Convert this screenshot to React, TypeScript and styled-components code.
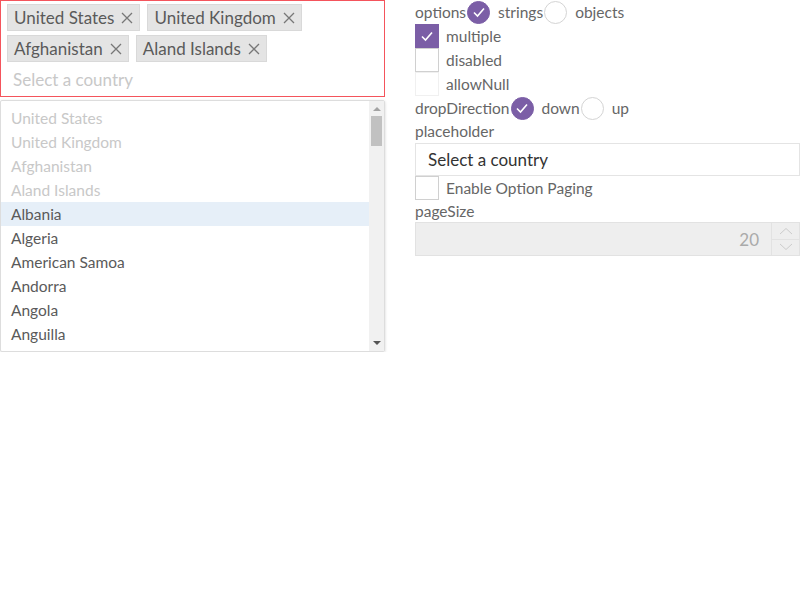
import React from "react";
import styled, { createGlobalStyle } from "styled-components";

const GlobalStyle = createGlobalStyle`
  body {
    margin: 0;
    background: #fff;
    font-family: Lato, "Noto Sans", sans-serif;
    color: #555;
  }
`;

const selected = ["United States", "United Kingdom", "Afghanistan", "Aland Islands"];
const options = [
  "United States",
  "United Kingdom",
  "Afghanistan",
  "Aland Islands",
  "Albania",
  "Algeria",
  "American Samoa",
  "Andorra",
  "Angola",
  "Anguilla",
];

const Page = styled.div`
  display: grid;
  grid-template-columns: 385px 385px;
  column-gap: 30px;
  align-items: start;
`;

const LeftColumn = styled.div`
  display: flex;
  flex-direction: column;
  gap: 3px;
`;

const SelectBox = styled.div`
  box-sizing: border-box;
  height: 97px;
  border: 1px solid #f4545c;
  padding: 3px 6px 0;
  display: flex;
  flex-wrap: wrap;
  align-content: flex-start;
  gap: 4px 7px;
`;

const Tag = styled.span`
  box-sizing: border-box;
  height: 27px;
  display: inline-flex;
  align-items: center;
  gap: 7px;
  padding: 0 6px;
  background: #e4e4e4;
  border: 1px solid #d9d9d9;
  color: #5a5a5a;
  font-size: 17px;
`;

const Remove = styled.svg`
  width: 12px;
  height: 12px;
  stroke: #777;
  stroke-width: 1.3;
`;

const Placeholder = styled.div`
  width: 100%;
  padding: 2px 0 0 6px;
  line-height: 24px;
  color: #c8c8c8;
  font-size: 17px;
`;

const Dropdown = styled.div`
  box-sizing: border-box;
  height: 252px;
  display: flex;
  border: 1px solid #ddd;
  border-radius: 2px;
  box-shadow: 0 1px 3px rgba(0, 0, 0, 0.18);
  overflow: hidden;
`;

const List = styled.ul`
  flex: 1;
  margin: 0;
  padding: 5px 0 0;
  list-style: none;
  overflow: hidden;
`;

const Item = styled.li<{ $muted?: boolean; $active?: boolean }>`
  height: 24px;
  line-height: 24px;
  padding-left: 10px;
  font-size: 15.5px;
  color: ${(p) => (p.$muted ? "#c8c8c8" : "#5a5a5a")};
  background: ${(p) => (p.$active ? "#e6eff8" : "transparent")};
`;

const Track = styled.div`
  width: 15px;
  background: #f1f1f1;
  display: flex;
  flex-direction: column;
  align-items: center;
`;

const Arrow = styled.div<{ $down?: boolean }>`
  width: 0;
  height: 0;
  margin: ${(p) => (p.$down ? "auto 0 6px" : "6px 0 0")};
  border-left: 4px solid transparent;
  border-right: 4px solid transparent;
  ${(p) => (p.$down ? "border-top: 4px solid #555;" : "border-bottom: 4px solid #a3a3a3;")}
`;

const Thumb = styled.div`
  width: 11px;
  height: 30px;
  margin-top: 5px;
  background: #c1c1c1;
`;

const RightColumn = styled.div`
  display: flex;
  flex-direction: column;
  font-size: 15.5px;
  color: #666;
`;

const Row = styled.div`
  height: 24px;
  display: flex;
  align-items: center;
`;

const Label = styled.span`
  line-height: 24px;
`;

const OptionLabel = styled.span`
  margin-left: 8px;
`;

const Radio = styled.span<{ $checked?: boolean }>`
  box-sizing: border-box;
  width: 23px;
  height: 23px;
  margin-left: 1px;
  border-radius: 50%;
  display: inline-flex;
  align-items: center;
  justify-content: center;
  background: ${(p) => (p.$checked ? "#7b5ea6" : "#fff")};
  border: 1px solid ${(p) => (p.$checked ? "#7b5ea6" : "#d4d4d4")};
`;

const Check = styled.span<{ $checked?: boolean; $faint?: boolean }>`
  box-sizing: border-box;
  width: 24px;
  height: 24px;
  display: inline-flex;
  align-items: center;
  justify-content: center;
  background: ${(p) => (p.$checked ? "#7b5ea6" : "#fff")};
  border: 1px solid
    ${(p) => (p.$checked ? "#7b5ea6" : p.$faint ? "#f0f0f0" : "#d0d0d0")};
  margin-right: 7px;
`;

const Tick = styled.svg`
  width: 14px;
  height: 14px;
  fill: none;
  stroke: #fff;
  stroke-width: 1.6;
`;

const FieldLabel = styled.div<{ $h: number }>`
  height: ${(p) => p.$h}px;
  line-height: ${(p) => p.$h}px;
`;

const TextInput = styled.div`
  box-sizing: border-box;
  height: 33px;
  display: flex;
  align-items: center;
  padding-left: 12px;
  border: 1px solid #e4e4e4;
  color: #333;
  font-size: 17px;
`;

const NumberInput = styled.div`
  box-sizing: border-box;
  height: 34px;
  display: flex;
  border: 1px solid #e2e2e2;
  background: #eee;
`;

const NumberValue = styled.div`
  flex: 1;
  display: flex;
  align-items: center;
  justify-content: flex-end;
  padding-right: 12px;
  color: #aaa;
  font-size: 17px;
`;

const Spinner = styled.div`
  width: 27px;
  display: flex;
  flex-direction: column;
  border-left: 1px solid #e2e2e2;
`;

const SpinButton = styled.div`
  flex: 1;
  display: flex;
  align-items: center;
  justify-content: center;
  & + & {
    border-top: 1px solid #e2e2e2;
  }
`;

const Chevron = styled.svg`
  width: 16px;
  height: 8px;
  fill: none;
  stroke: #ccc;
  stroke-width: 1;
`;

const TickIcon = () => (
  <Tick viewBox="0 0 14 14">
    <path d="M2 7.5 L5.5 11 L12 3.5" />
  </Tick>
);

const Toggle = ({ label, checked, faint }: { label: string; checked?: boolean; faint?: boolean }) => (
  <Row>
    <Check $checked={checked} $faint={faint}>
      {checked && <TickIcon />}
    </Check>
    <Label>{label}</Label>
  </Row>
);

const RadioGroup = ({ title, values, value }: { title: string; values: string[]; value: string }) => (
  <Row>
    <Label>{title}</Label>
    {values.map((v) => (
      <React.Fragment key={v}>
        <Radio $checked={v === value}>{v === value && <TickIcon />}</Radio>
        <OptionLabel>{v}</OptionLabel>
      </React.Fragment>
    ))}
  </Row>
);

export default function App() {
  return (
    <>
      <GlobalStyle />
      <Page>
        <LeftColumn>
          <SelectBox>
            {selected.map((s) => (
              <Tag key={s}>
                {s}
                <Remove viewBox="0 0 12 12">
                  <path d="M1 1 L11 11 M11 1 L1 11" />
                </Remove>
              </Tag>
            ))}
            <Placeholder>Select a country</Placeholder>
          </SelectBox>
          <Dropdown>
            <List>
              {options.map((o, i) => (
                <Item key={o} $muted={i < 4} $active={i === 4}>
                  {o}
                </Item>
              ))}
            </List>
            <Track>
              <Arrow />
              <Thumb />
              <Arrow $down />
            </Track>
          </Dropdown>
        </LeftColumn>
        <RightColumn>
          <RadioGroup title="options" values={["strings", "objects"]} value="strings" />
          <Toggle label="multiple" checked />
          <Toggle label="disabled" />
          <Toggle label="allowNull" faint />
          <RadioGroup title="dropDirection" values={["down", "up"]} value="down" />
          <FieldLabel $h={23}>placeholder</FieldLabel>
          <TextInput>Select a country</TextInput>
          <Toggle label="Enable Option Paging" />
          <FieldLabel $h={22}>pageSize</FieldLabel>
          <NumberInput>
            <NumberValue>20</NumberValue>
            <Spinner>
              <SpinButton>
                <Chevron viewBox="0 0 16 8">
                  <path d="M2 7 L8 1.5 L14 7" />
                </Chevron>
              </SpinButton>
              <SpinButton>
                <Chevron viewBox="0 0 16 8">
                  <path d="M2 1 L8 6.5 L14 1" />
                </Chevron>
              </SpinButton>
            </Spinner>
          </NumberInput>
        </RightColumn>
      </Page>
    </>
  );
}
